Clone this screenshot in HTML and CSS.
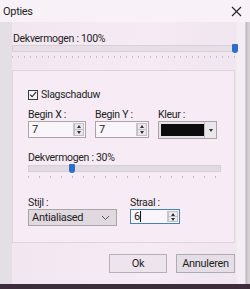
FILE: index.html
```html
<!DOCTYPE html>
<html>
<head>
<meta charset="utf-8">
<link rel="stylesheet" href="styles.css">
</head>
<body>
<div class="dialog">
  <div class="titlebar">
    <span class="title">Opties</span>
    <svg class="close" width="11" height="11" viewBox="0 0 11 11"><path d="M1 1L10 10M10 1L1 10" stroke="#222" stroke-width="1.1"/></svg>
  </div>
  <div class="body">
    <div class="label top-label">Dekvermogen : 100%</div>
    <div class="slider wide">
      <div class="track"></div>
      <div class="thumb" style="left: 220px"></div>
      <div class="ticks"></div>
    </div>
    <div class="group">
      <label class="check-row">
        <span class="checkbox"><svg width="9" height="9" viewBox="0 0 9 9"><path d="M1.2 4.6L3.5 7L8 1.5" fill="none" stroke="#222" stroke-width="1.2"/></svg></span>
        <span class="label">Slagschaduw</span>
      </label>
      <div class="fields upper">
        <div class="field">
          <div class="label">Begin X :</div>
          <div class="spin w58"><span class="val">7</span><span class="arrows"><i class="up"></i><i class="down"></i></span></div>
        </div>
        <div class="field">
          <div class="label">Begin Y :</div>
          <div class="spin w54"><span class="val">7</span><span class="arrows"><i class="up"></i><i class="down"></i></span></div>
        </div>
        <div class="field">
          <div class="label">Kleur :</div>
          <div class="colorbox"><span class="swatch"></span><span class="drop"><i class="down"></i></span></div>
        </div>
      </div>
      <div class="label mid-label">Dekvermogen : 30%</div>
      <div class="slider narrow">
        <div class="track"></div>
        <div class="thumb" style="left: 41px"></div>
        <div class="ticks"></div>
      </div>
      <div class="fields lower">
        <div class="field">
          <div class="label">Stijl :</div>
          <div class="combo"><span class="val">Antialiased</span><svg class="chev" width="9" height="6" viewBox="0 0 9 6"><path d="M1 1L4.5 4.5L8 1" fill="none" stroke="#555" stroke-width="1"/></svg></div>
        </div>
        <div class="field straal">
          <div class="label">Straal :</div>
          <div class="spin w50 focus"><span class="val">6<span class="caret"></span></span><span class="arrows"><i class="up"></i><i class="down"></i></span></div>
        </div>
      </div>
    </div>
    <div class="buttons">
      <button class="btn ok">Ok</button>
      <button class="btn">Annuleren</button>
    </div>
  </div>
  <div class="bottom"></div>
</div>
</body>
</html>
```
FILE: styles.css
```css
* { box-sizing: border-box; }
html, body { margin: 0; padding: 0; }
body {
  width: 250px;
  height: 289px;
  overflow: hidden;
  font-family: "Roboto", "Noto Sans", sans-serif;
  font-size: 10.5px;
  letter-spacing: -0.3px;
  color: #1e1e1e;
  background: #d9d3d9;
}
.dialog {
  width: 250px;
  height: 289px;
  display: flex;
  flex-direction: column;
  background: linear-gradient(to right, #e4dfe4 0 12px, #f2e6f1 12px, #f6eaf5 60%, #efe6ef 236px, #f4eef4 237px, #f4eef4 245px, #b9b4b9 246px, #d4d0d4 248px);
}
.titlebar {
  height: 22px;
  display: flex;
  align-items: center;
  justify-content: space-between;
  padding: 0 8px 0 3px;
  background: #f8f1f7;
  font-size: 11px;
}
.body {
  flex: 1;
  display: flex;
  flex-direction: column;
  padding: 0 0 0 12px;
}
.label { line-height: 13px; white-space: nowrap; }
.top-label { margin-top: 10px; padding-left: 1px; }
.slider { position: relative; }
.slider.wide { width: 224px; height: 14px; }
.slider.narrow { width: 193px; height: 14px; margin-top: 1px; }
.track {
  height: 7px;
  background: #e2dae2;
  border: 1px solid #d8d0d8;
}
.slider.wide .track { background: #e6dfe6; }
.thumb {
  position: absolute;
  top: -1px;
  width: 6px;
  height: 9px;
  background: #2b6fc8;
  border-radius: 1px 1px 3px 3px;
}
.ticks {
  margin-top: 4px;
  height: 2px;
  background: repeating-linear-gradient(to right, #c8c0c8 0 1px, transparent 1px 6px);
}
.slider.narrow .ticks { background: repeating-linear-gradient(to right, #c0b8c0 0 1px, transparent 1px 11px); }
.group {
  margin-top: 11px;
  width: 223px;
  height: 173px;
  border: 1px solid #ddd5dd;
  background: #f7ecf6;
  padding: 18px 0 0 15px;
  display: flex;
  flex-direction: column;
}
.check-row { display: flex; align-items: center; gap: 3px; height: 11px; }
.checkbox {
  width: 10px;
  height: 10px;
  border: 1px solid #3a3a3a;
  background: #f8f4f8;
  display: flex;
  align-items: center;
  justify-content: center;
}
.fields { display: flex; }
.fields .label { line-height: 11px; }
.upper { margin-top: 9px; }
.lower { margin-top: 18px; }
.field { display: flex; flex-direction: column; gap: 1px; margin-right: 9px; }
.spin, .colorbox, .combo {
  height: 17px;
  display: flex;
  align-items: stretch;
  border: 1px solid #a8a4a8;
  background: #faf5fa;
}
.w58 { width: 58px; }
.w54 { width: 54px; }
.w50 { width: 50px; }
.spin .val { flex: 1; padding-left: 3px; line-height: 15px; font-size: 11px; }
.arrows {
  width: 11px;
  display: flex;
  flex-direction: column;
  border-left: 1px solid #c8c4c8;
  margin: 1px 1px 1px 0;
}
.arrows i {
  flex: 1;
  display: flex;
  align-items: center;
  justify-content: center;
  background: #ece6ec;
  border: 1px solid #c4c0c4;
}
.arrows i + i { border-top: none; }
.up::after {
  content: "";
  border-left: 2.5px solid transparent;
  border-right: 2.5px solid transparent;
  border-bottom: 3px solid #333;
}
.down::after {
  content: "";
  border-left: 2.5px solid transparent;
  border-right: 2.5px solid transparent;
  border-top: 3px solid #333;
}
.colorbox { width: 59px; height: 18px; padding: 2px 0 2px 2px; background: #e6e2e6; }
.swatch { flex: 1; background: #0c0c0c; }
.drop {
  width: 12px;
  display: flex;
  align-items: center;
  justify-content: center;
  margin: -2px 0;
  border-left: 1px solid #c0bcc0;
  background: #ebe7eb;
}
.drop i { display: flex; }
.mid-label { margin-top: 12px; }
.combo {
  width: 89px;
  background: #e0d9e0;
  align-items: center;
  justify-content: space-between;
  padding: 0 6px 0 3px;
  font-size: 11px;
}
.straal { margin-left: 4px; }
.spin.focus { border-color: #4d7fae; height: 15px; }
.spin.focus .val { line-height: 13px; }
.caret { display: inline-block; width: 1px; height: 11px; background: #111; vertical-align: -2px; }
.spin.focus .arrows i { background: #e8ecf2; }
.buttons {
  display: flex;
  gap: 9px;
  padding-left: 97px;
  margin-top: 11px;
}
.btn {
  font-family: inherit;
  font-size: 11px;
  letter-spacing: -0.3px;
  color: #1e1e1e;
  height: 19px;
  width: 59px;
  padding: 0;
  border: 1px solid #adadad;
  background: #e6dee6;
}
.btn.ok { width: 58px; border-color: #b7b0b7; background: #eee4ee; }
.bottom { height: 5px; background: #3c2c3c; }
```
